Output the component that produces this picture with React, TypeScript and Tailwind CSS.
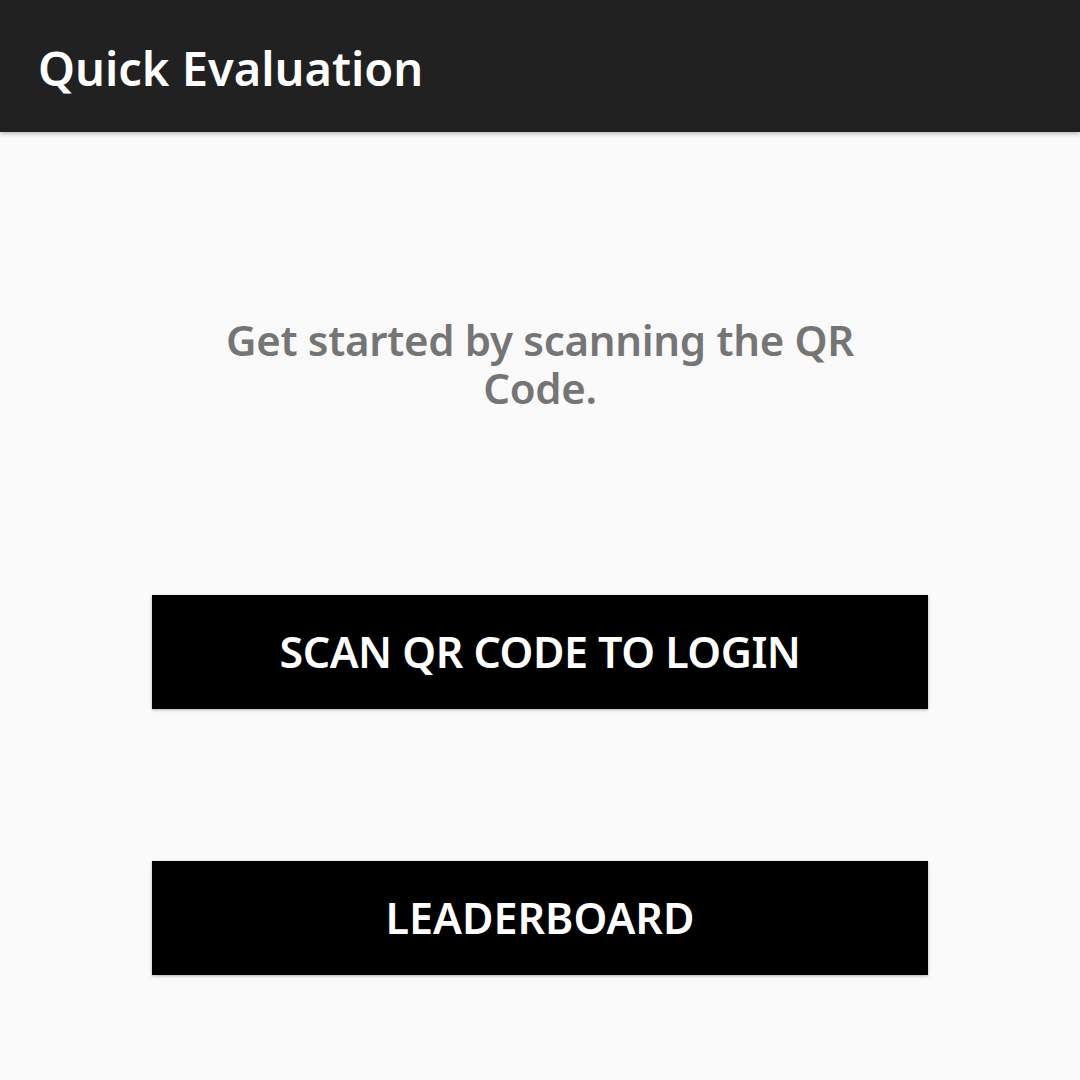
import React from 'react';

const App: React.FC = () => {
  return (
    <div
      className="min-h-[1080px] w-full bg-[#fafafa]"
      style={{ fontFamily: '"Noto Sans", "Open Sans", sans-serif' }}
    >
      <header className="h-[132px] bg-[#212121] flex items-center px-[38px] pt-[4px] shadow-[0_2px_4px_rgba(0,0,0,0.25)]">
        <h1 className="text-white text-[47px] font-semibold tracking-[0px]">Quick Evaluation</h1>
      </header>

      <div className="flex flex-col items-center">
        <p className="mt-[184px] w-[680px] text-center text-[#757575] text-[42px] leading-[48px] font-semibold tracking-[-0.3px]">
          Get started by scanning the QR Code.
        </p>

        <button className="mt-[183px] w-[776px] h-[114px] bg-black text-white text-[43px] font-semibold tracking-[-0.5px] shadow-[0_1px_3px_rgba(0,0,0,0.3)]">
          SCAN QR CODE TO LOGIN
        </button>

        <button className="mt-[152px] w-[776px] h-[114px] bg-black text-white text-[43px] font-semibold tracking-[0px] shadow-[0_1px_3px_rgba(0,0,0,0.3)]">
          LEADERBOARD
        </button>
      </div>
    </div>
  );
};

export default App;
